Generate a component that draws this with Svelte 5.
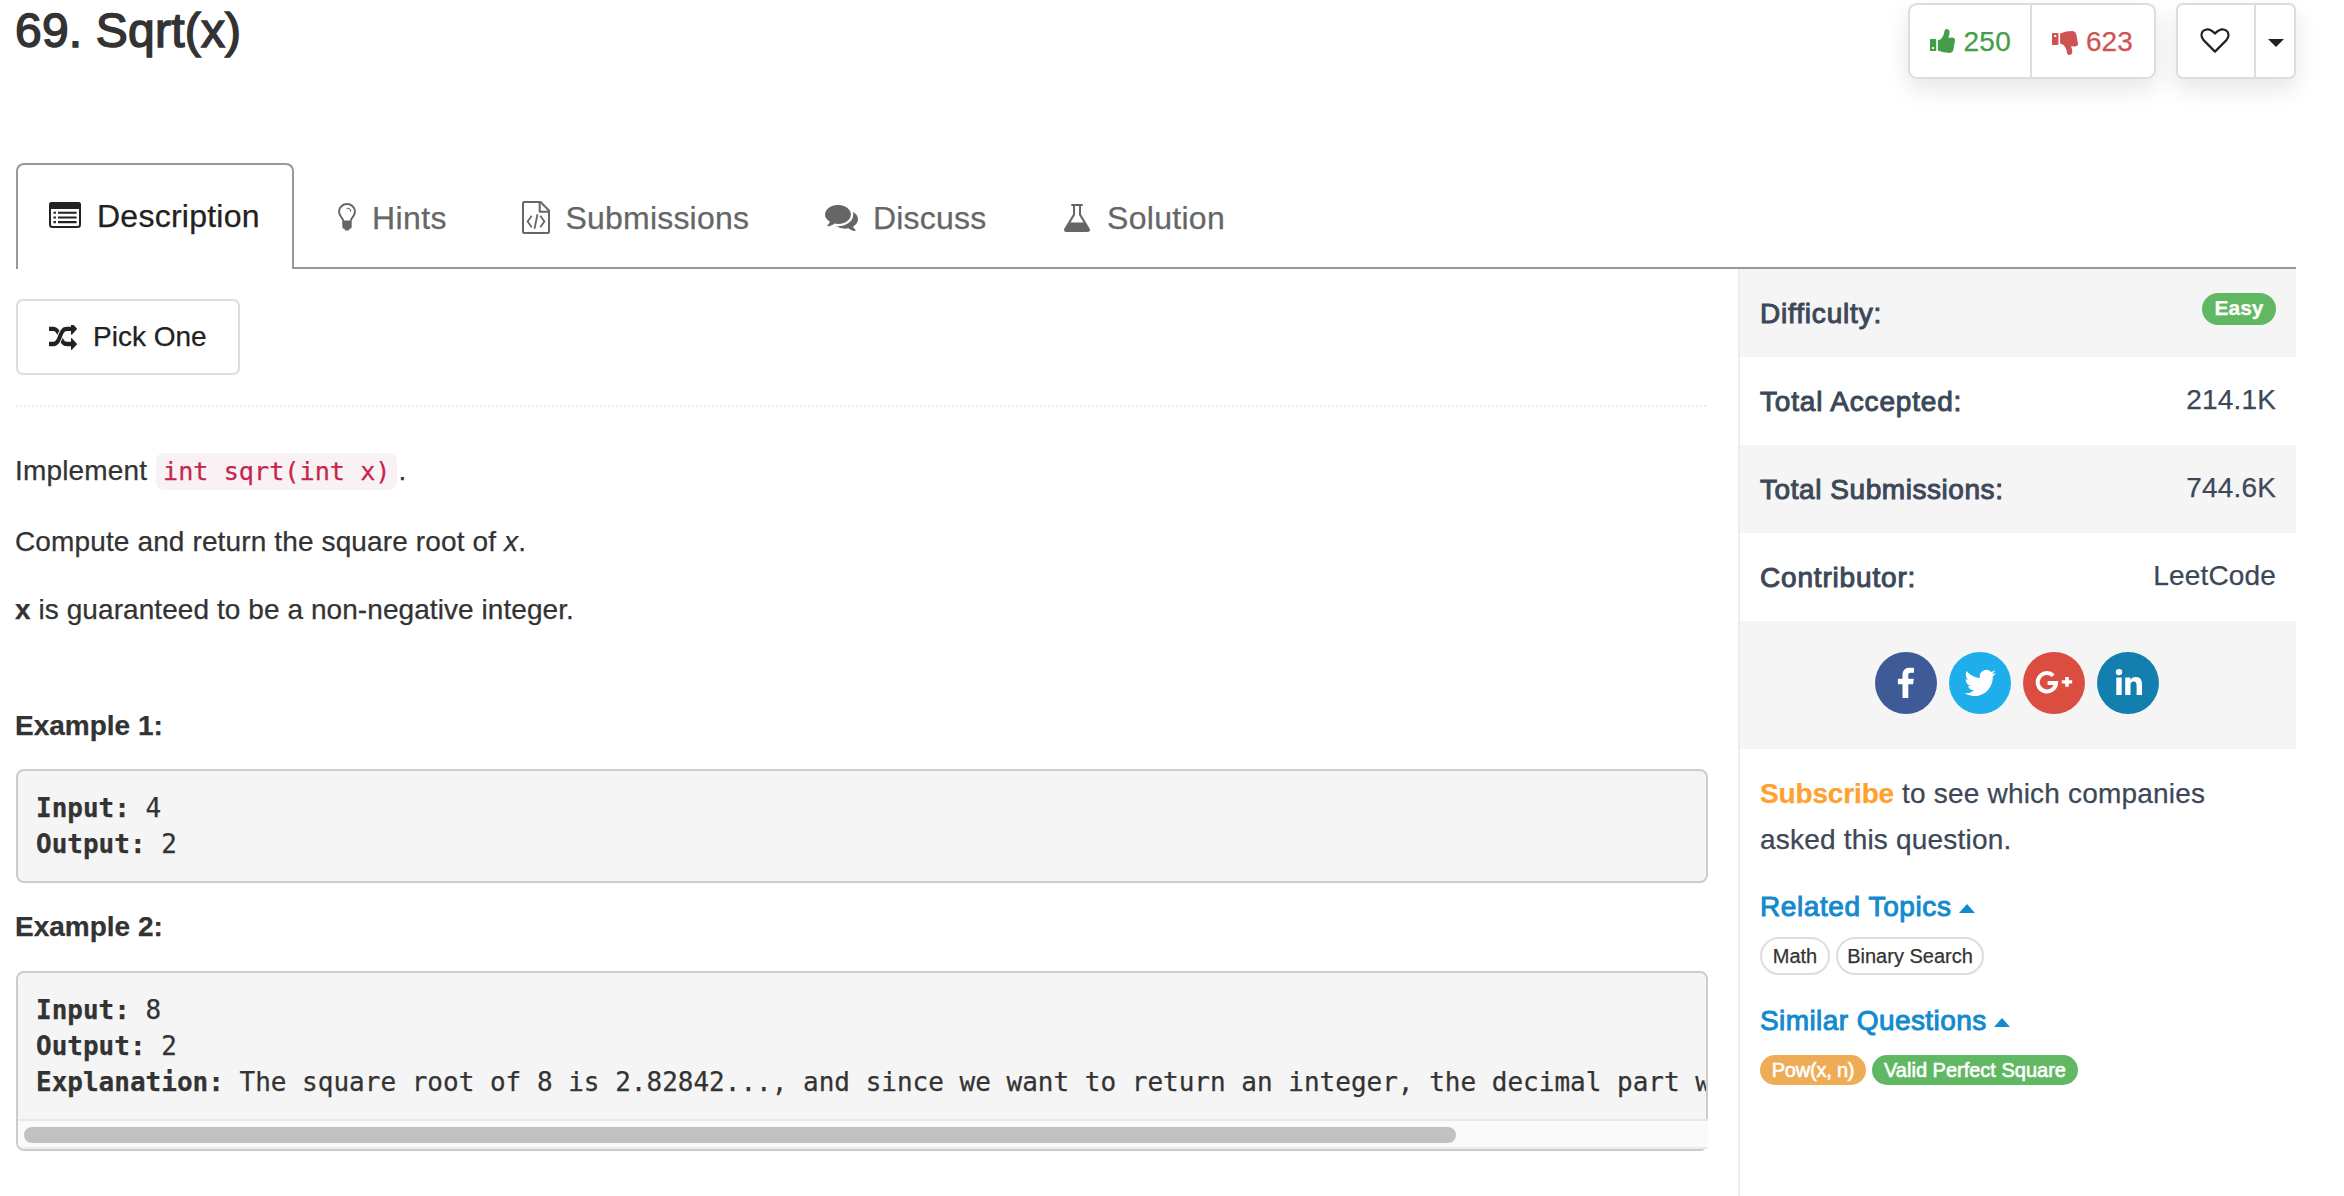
<script lang="ts">
  const tabs = [
    { id: 'hints', label: 'Hints' },
    { id: 'submissions', label: 'Submissions' },
    { id: 'discuss', label: 'Discuss' },
    { id: 'solution', label: 'Solution' },
  ];

  const stats = [
    { label: 'Total Accepted:', value: '214.1K', cls: 'accepted' },
    { label: 'Total Submissions:', value: '744.6K', cls: 'submitted' },
    { label: 'Contributor:', value: 'LeetCode', cls: 'contributor' },
  ];

  // Cuff with a button hole, then the hand
  const thumb =
    'M.8 10H5.400Q6.200 10 6.200 10.800V21.200Q6.200 22 5.400 22H.8Q0 22 0 21.200V10.800Q0 10 .8 10ZM2.200 18V19.900H4.100V18ZM7.800 11.200Q10 11 11 10Q13.500 7.500 14 4.500Q14.400 0 16.600 0Q19.700 .3 19.500 4Q19.200 6.500 18.300 8.700L22.500 8.600Q25.300 9 25 11.500L23.300 21Q22.800 23.600 20 24Q13.500 24 7.800 21.600Z';
</script>

<div class="page">
  <header>
    <h1>69. Sqrt(x)</h1>
    <div class="actions">
      <div class="group">
        <button class="vote up">
          <svg width="25" height="24" viewBox="0 0 25 24"><path d={thumb} fill-rule="evenodd" /></svg>
          <span>250</span>
        </button>
        <button class="vote down">
          <svg width="26" height="24" viewBox="0 0 25 24" preserveAspectRatio="none"><path d={thumb} fill-rule="evenodd" /></svg>
          <span>623</span>
        </button>
      </div>
      <div class="group fav">
        <button class="heart" aria-label="Favorite">
          <svg width="30" height="26" viewBox="0 0 30 26">
            <path d="M15 23.6 L3.8 12.4 C0.6 9 0.9 4.6 3.6 2.7 C7 0.4 11.3 1.6 15 5.6 C18.7 1.6 23 0.4 26.4 2.7 C29.1 4.6 29.4 9 26.2 12.4 Z" />
          </svg>
        </button>
        <button class="more" aria-label="More">
          <svg width="16" height="8" viewBox="0 0 16 8"><path d="M0 0H16L8 8Z" /></svg>
        </button>
      </div>
    </div>
  </header>

  <nav>
    <div class="tab active">
      <svg width="32" height="26" viewBox="0 0 32 26">
        <rect x="1" y="1" width="30" height="24" rx="2.5" fill="none" stroke="currentColor" stroke-width="2" />
        <path d="M0 7V3a3 3 0 0 1 3-3h26a3 3 0 0 1 3 3v4z" />
        <path d="M4.5 9.7h2.4v2.1h-2.4zM4.5 14.4h2.4v2.1h-2.4zM4.5 19.1h2.4v2.1h-2.4zM9 9.7h18.600v2.1H9zM9 14.4h18.600v2.1H9zM9 19.1h18.600v2.1H9z" />
      </svg>
      <span>Description</span>
    </div>
    {#each tabs as tab}
      <div class="tab {tab.id}">
        {#if tab.id === 'hints'}
          <svg width="18" height="28" viewBox="0 0 18 28">
            <path d="M5.500 18.500C5.300 14.800 1 13.500 1 8.600C1 4.300 4.600 1 9 1C13.400 1 17 4.300 17 8.600C17 13.500 12.700 14.800 12.500 18.500Z" fill="none" stroke="currentColor" stroke-width="1.900" />
            <path d="M9 5.200C11 5.200 12.600 6.400 12.700 8.200" fill="none" stroke="currentColor" stroke-width="1.100" stroke-linecap="round" />
            <path d="M4.300 18.200H13.700V24.200Q13.700 25.300 11.500 26L10.800 27.600H7.200L6.500 26Q4.300 25.300 4.300 24.200Z" />
          </svg>
        {:else if tab.id === 'submissions'}
          <svg width="28" height="33" viewBox="0 0 28 33">
            <g fill="none" stroke="currentColor" stroke-width="2" stroke-linejoin="round">
              <path d="M2.300 1H18.500L27 9.500V30.500Q27 32 25.500 32H2.500Q1 32 1 30.500V2.300Q1 1 2.300 1Z" />
              <path d="M17.700 1.500V10.800H26.500" />
              <path d="M9.700 14.800L5.600 20.500L9.700 26.200M18.300 14.800L22.400 20.500L18.300 26.200M15.500 13.300L12.500 27.700" stroke-width="1.800" />
            </g>
          </svg>
        {:else if tab.id === 'discuss'}
          <svg width="33" height="26" viewBox="0 256 1792 1408" preserveAspectRatio="none">
            <path d="M1408 768q0 139-94 257t-256.500 186.500-353.500 68.500q-86 0-176-16-124 88-278 128-36 9-86 16h-3q-11 0-20.500-8t-11.500-21q-1-3-1-6.500t.5-6.500 2-6l2.500-5 3.500-5.500 4-5 4.500-5 4-4.500q5-6 23-25t26-29.500 22.500-29 25-38.500 20.500-44q-124-72-195-177t-71-224q0-139 94-257t256.500-186.500 353.500-68.500 353.500 68.500 256.500 186.500 94 257zm384 256q0 120-71 224.500t-195 176.500q10 24 20.500 44t25 38.500 22.500 29 26 29.500 23 25q1 1 4 4.500t4.500 5 4 5 3.500 5.500l2.500 5 2 6 .5 6.500-1 6.500q-3 14-13 22t-22 7q-50-7-86-16-154-40-278-128-90 16-176 16-271 0-472-132 58 4 88 4 161 0 309-45t264-129q125-92 192-212t67-254q0-77-23-152 129 71 204 178t75 230z" />
          </svg>
        {:else}
          <svg width="26" height="28" viewBox="0 0 26 28">
            <path d="M7.300 0H18.700V2H17V10.300L25.600 24.600Q27 28 23.500 28H2.500Q-1 28 .4 24.600L9 10.300V2H7.300ZM11 2V10.900L6.500 18.400H19.500L15 10.900V2Z" fill-rule="evenodd" />
          </svg>
        {/if}
        <span>{tab.label}</span>
      </div>
    {/each}
  </nav>

  <div class="body">
    <main>
      <button class="pick">
        <svg width="28" height="25" viewBox="0 160 1792 1472" preserveAspectRatio="none">
          <path d="M666 481q-60 92-137 273-22-45-37-72.500t-40.500-63.500-51-56.500-63-35-81.500-14.500h-224q-14 0-23-9t-9-23v-192q0-14 9-23t23-9h224q250 0 410 225zm1126 799q0 14-9 23l-320 320q-9 9-23 9-13 0-22.500-9.500t-9.500-22.500v-192q-32 0-85 .5t-81 1-73-1-71-5-64-10.500-63-18.500-58-28.500-59-40-55-53.500-56-69.500q59-93 136-273 22 45 37 72.500t40.500 63.500 51 56.500 63 35 81.500 14.500h256v-192q0-14 9-23t23-9q12 0 24 10l319 319q9 9 9 23zm0-896q0 14-9 23l-320 320q-9 9-23 9-13 0-22.500-9.500t-9.500-22.500v-192h-256q-48 0-87 15t-69 45-51 61.500-45 77.500q-32 62-78 171-29 66-49.500 111t-54 105-64 100-74 83-90 68.500-106.500 42-128 16.500h-224q-14 0-23-9t-9-23v-192q0-14 9-23t23-9h224q48 0 87-15t69-45 51-61.500 45-77.500q32-62 78-171 29-66 49.500-111t54-105 64-100 74-83 90-68.500 106.500-42 128-16.500h256v-192q0-14 9-23t23-9q12 0 24 10l319 319q9 9 9 23z" />
        </svg>
        <span>Pick One</span>
      </button>
      <hr />
      <p class="implement"><span>Implement</span> <code>int sqrt(int x)</code>.</p>
      <p class="compute">Compute and return the square root of <i>x</i>.</p>
      <p class="guarantee"><b>x</b> is guaranteed to be a non-negative integer.</p>
      <p class="example first"><b>Example 1:</b></p>
      <pre><b>Input:</b> 4
<b>Output:</b> 2</pre>
      <p class="example"><b>Example 2:</b></p>
      <div class="scroll">
        <pre><b>Input:</b> 8
<b>Output:</b> 2
<b>Explanation:</b> The square root of 8 is 2.82842..., and since we want to return an integer, the decimal part will be truncated.</pre>
        <div class="track"><div class="thumb"></div></div>
      </div>
    </main>

    <aside>
      <div class="row shaded difficulty">
        <span class="label">Difficulty:</span>
        <span class="badge">Easy</span>
      </div>
      {#each stats as s, i}
        <div class="row {s.cls}" class:shaded={i === 1}>
          <span class="label">{s.label}</span>
          <span class="value">{s.value}</span>
        </div>
      {/each}
      <div class="social">
        <svg width="62" height="62" viewBox="0 0 62 62">
          <circle cx="31" cy="31" r="31" fill="#3e5b98" />
          <svg x="22.700" y="15.600" width="16.300" height="30.400" viewBox="479 0 864 1664" preserveAspectRatio="none">
            <path fill="#fff" d="M1343 12v264h-157q-86 0-116 36t-30 108v189h293l-39 296h-254v759h-306v-759h-255v-296h255v-218q0-186 104-288.500t277-102.500q147 0 228 12z" />
          </svg>
        </svg>
        <svg width="62" height="62" viewBox="0 0 62 62">
          <circle cx="31" cy="31" r="31" fill="#1faeec" />
          <svg x="15.500" y="17.800" width="31.500" height="26.400" viewBox="0 2.200 24 19.600" preserveAspectRatio="none">
            <path fill="#fff" d="M23.953 4.570a10 10 0 01-2.825.775 4.958 4.958 0 002.163-2.723c-.951.555-2.005.959-3.127 1.184a4.920 4.920 0 00-8.384 4.482C7.690 8.095 4.067 6.130 1.640 3.162a4.822 4.822 0 00-.666 2.475c0 1.710.870 3.213 2.188 4.096a4.904 4.904 0 01-2.228-.616v.060a4.923 4.923 0 003.946 4.827 4.996 4.996 0 01-2.212.085 4.936 4.936 0 004.604 3.417 9.867 9.867 0 01-6.102 2.105c-.390 0-.779-.023-1.170-.067a13.995 13.995 0 007.557 2.209c9.053 0 13.998-7.496 13.998-13.985 0-.210 0-.420-.015-.630A9.935 9.935 0 0024 4.590z" />
          </svg>
        </svg>
        <svg width="62" height="62" viewBox="0 0 62 62">
          <circle cx="31" cy="31" r="31" fill="#db4d3f" />
          <path d="M30.300 23.600A9.200 9.200 0 1 0 33.100 31H24.600" fill="none" stroke="#fff" stroke-width="4" />
          <path d="M42.200 25h3.600v3.200h3.400v3.400h-3.400v3.200h-3.600v-3.200h-3.400v-3.400h3.400z" fill="#fff" />
        </svg>
        <svg width="62" height="62" viewBox="0 0 62 62">
          <circle cx="31" cy="31" r="31" fill="#137fae" />
          <circle cx="22" cy="20.100" r="3.200" fill="#fff" />
          <path fill="#fff" d="M19.300 25.500h5.400v17.500h-5.400zM28.200 25.500h5.100v2.400c.7-1.400 2.500-2.900 5.200-2.900 5.400 0 6.500 3.500 6.500 8.200v9.800h-5.400v-8.700c0-2.100 0-4.700-2.900-4.700s-3.200 2.200-3.200 4.600v8.800h-5.300z" />
        </svg>
      </div>

      <p class="subscribe"><b>Subscribe</b> to see which companies<br />asked this question.</p>

      <h2 class="related">
        <span>Related Topics</span>
        <svg width="16" height="9" viewBox="0 0 16 9"><path d="M0 9H16L8 0Z" /></svg>
      </h2>
      <div class="tags topics">
        <span class="tag math">Math</span>
        <span class="tag">Binary Search</span>
      </div>

      <h2 class="similar">
        <span>Similar Questions</span>
        <svg width="16" height="9" viewBox="0 0 16 9"><path d="M0 9H16L8 0Z" /></svg>
      </h2>
      <div class="tags">
        <span class="pill medium">Pow(x, n)</span>
        <span class="pill easy">Valid Perfect Square</span>
      </div>
    </aside>
  </div>
</div>

<style>
  :global(body) {
    background: #fff;
  }
  .page {
    width: 2344px;
    height: 1196px;
    box-sizing: border-box;
    padding: 0 48px 0 16px;
    overflow: hidden;
    color: #333;
    font: 28px/40px "Liberation Sans", Arial, sans-serif;
    -webkit-text-stroke: 0.25px currentColor;
  }
  .page :global(*) {
    box-sizing: border-box;
  }
  svg {
    display: block;
    flex: none;
    fill: currentColor;
  }
  button {
    display: flex;
    align-items: center;
    margin: 0;
    padding: 0;
    border: 0;
    background: #fff;
    color: #222;
    font: inherit;
  }
  p,
  h1,
  h2,
  pre {
    margin: 0;
  }

  header {
    display: flex;
    justify-content: space-between;
    align-items: flex-start;
    height: 163px;
  }
  h1 {
    margin-left: -1px;
    font-size: 48px;
    line-height: 62px;
    font-weight: 400;
    letter-spacing: 0.2px;
    -webkit-text-stroke: 1.5px currentColor;
  }
  .actions {
    display: flex;
    gap: 20px;
    padding-top: 3px;
  }
  .group {
    display: flex;
    height: 76px;
    border: 2px solid #ddd;
    border-radius: 9px;
    background: #fff;
    box-shadow: 0 10px 24px rgba(0, 0, 0, 0.1);
  }
  .group.fav {
    border-radius: 7px;
  }
  .group button {
    background: none;
  }
  .group button + button {
    border-left: 2px solid #ddd;
  }
  .vote span {
    padding-top: 1px;
  }
  .up {
    width: 120px;
    padding-left: 20px;
    gap: 8.5px;
    color: #449d48;
    letter-spacing: 0.3px;
  }
  .up svg {
    margin-bottom: 1px;
  }
  .down {
    width: 124px;
    padding-left: 20px;
    gap: 8px;
    color: #d05353;
  }
  .down svg {
    margin-top: 4px;
    transform: scaleY(-1);
  }
  .heart {
    width: 76px;
    padding-left: 22px;
  }
  .heart svg {
    fill: none;
    stroke: #222;
    stroke-width: 2.2;
    stroke-linejoin: round;
  }
  .more {
    width: 40px;
    padding-left: 12px;
  }
  .more svg {
    margin-top: 4px;
  }

  nav {
    display: flex;
    height: 106px;
    font-size: 32px;
    color: #666;
  }
  .tab {
    display: flex;
    align-items: center;
    gap: 15px;
    padding: 5px 0 0 44px;
    border-bottom: 2px solid #999;
    letter-spacing: 0.2px;
  }
  .active {
    width: 278px;
    gap: 16px;
    padding: 0 0 2px 31px;
    border: 2px solid #999;
    border-bottom: 0;
    border-radius: 8px 8px 0 0;
    color: #222;
    letter-spacing: 0.25px;
  }
  .active svg {
    margin-bottom: 3px;
  }
  .hints {
    width: 184px;
    gap: 16px;
    letter-spacing: 0.4px;
  }
  .hints svg {
    margin-bottom: 1px;
  }
  .submissions {
    width: 303px;
    gap: 15.5px;
  }
  .discuss {
    width: 239px;
    gap: 15px;
  }
  .discuss svg {
    margin-top: 1px;
  }
  .solution {
    flex: 1;
    gap: 17px;
    letter-spacing: 0.3px;
  }

  .body {
    display: grid;
    grid-template-columns: 1692px 558px;
    justify-content: space-between;
    height: 927px;
  }
  .pick {
    width: 224px;
    height: 76px;
    margin-top: 30px;
    padding-left: 31px;
    gap: 16px;
    border: 2px solid #ddd;
    border-radius: 7px;
  }
  hr {
    height: 2px;
    margin: 30px 0 44px;
    border: 0;
    background: repeating-linear-gradient(90deg, #eee 0 2px, transparent 2px 4px);
  }
  main p {
    margin-left: -1px;
    white-space: nowrap;
  }
  .implement {
    letter-spacing: 0.15px;
  }
  code {
    padding: 4px 7px;
    border-radius: 8px;
    background: #f9f2f4;
    color: #c7254e;
    font: 25.2px "DejaVu Sans Mono", monospace;
    letter-spacing: 0;
  }
  .implement code {
    margin-left: 1px;
    margin-right: 1px;
  }
  .compute {
    margin-top: 31px;
    letter-spacing: 0.13px;
  }
  .guarantee {
    margin-top: 28px;
    letter-spacing: 0.07px;
  }
  .example {
    margin-top: 24px;
    margin-bottom: 24px;
  }
  .example.first {
    margin-top: 76px;
    margin-bottom: 23px;
  }
  pre {
    padding: 19px 18px;
    border: 2px solid #ccc;
    border-radius: 8px;
    background: #f5f5f5;
    font: 26px/36px "DejaVu Sans Mono", monospace;
  }
  .scroll {
    height: 180px;
    border: 2px solid #ccc;
    border-radius: 8px;
    background: #f5f5f5;
  }
  .scroll pre {
    border: 0;
    overflow: hidden;
    height: 146px;
  }
  .track {
    width: 1690px;
    height: 30px;
    padding: 6px;
    border-top: 2px solid #e8e8e8;
    border-bottom: 2px solid #ececec;
    border-bottom-left-radius: 6px;
    background: #fafafa;
  }
  .thumb {
    width: 1432px;
    height: 16px;
    border-radius: 8px;
    background: #c1c1c1;
  }

  aside {
    border-left: 2px solid #eaefef;
    color: #3c4858;
  }
  .row {
    display: flex;
    align-items: center;
    justify-content: space-between;
    height: 88px;
    padding: 0 20px;
  }
  .shaded {
    background: #f5f5f5;
  }
  .label {
    padding-top: 1px;
    letter-spacing: 0.82px;
    -webkit-text-stroke: 1px currentColor;
  }
  .submitted .label {
    letter-spacing: 0.56px;
  }
  .value {
    padding-bottom: 3px;
    letter-spacing: 0.15px;
  }
  .badge {
    width: 74px;
    height: 32px;
    margin-bottom: 8px;
    border-radius: 16px;
    background: #60b962;
    color: #fff;
    font-size: 21px;
    font-weight: 700;
    line-height: 29px;
    text-align: center;
  }
  .social {
    display: flex;
    justify-content: center;
    gap: 12px;
    height: 128px;
    padding: 31px 2px 0 0;
    background: #f5f5f5;
  }
  .subscribe {
    padding: 22px 20px 0;
    line-height: 46px;
    letter-spacing: 0.2px;
    white-space: nowrap;
  }
  .subscribe b {
    color: #ffa12e;
    letter-spacing: -0.15px;
  }
  h2 {
    display: flex;
    align-items: center;
    gap: 7px;
    height: 40px;
    padding-left: 20px;
    color: #148ace;
    font-size: 28px;
    font-weight: 400;
    letter-spacing: 0.6px;
  }
  h2 span {
    -webkit-text-stroke: 1px currentColor;
  }
  h2 svg {
    margin-top: 3px;
  }
  .related {
    margin-top: 24px;
  }
  .similar {
    margin-top: 26px;
    letter-spacing: 0.42px;
  }
  .tags {
    display: flex;
    gap: 6px;
    margin-top: 14px;
    padding-left: 20px;
    font-size: 20px;
  }
  .topics {
    margin-top: 10px;
  }
  .tag {
    width: 148px;
    height: 38px;
    border: 2px solid #ddd;
    border-radius: 19px;
    color: #333;
    line-height: 34px;
    text-align: center;
  }
  .tag.math {
    width: 70px;
  }
  .pill {
    width: 106px;
    height: 30px;
    border-radius: 15px;
    color: #fff;
    line-height: 30px;
    text-align: center;
    -webkit-text-stroke: 0.6px currentColor;
  }
  .medium {
    background: #efac57;
    letter-spacing: -0.2px;
  }
  .easy {
    width: 206px;
    background: #60b962;
  }
</style>
